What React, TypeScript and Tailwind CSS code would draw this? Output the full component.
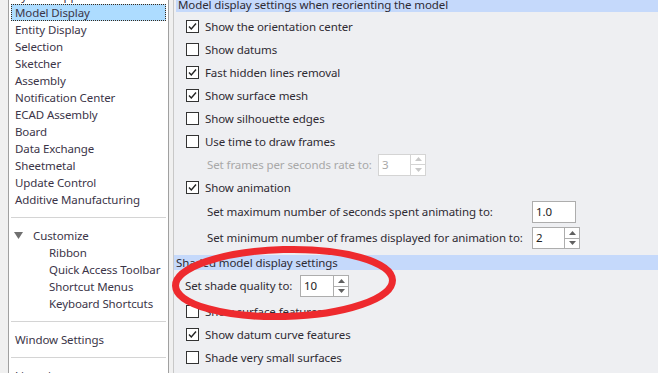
import { ReactNode } from "react"

const sideItems = [
  "System Appearance",
  "Model Display",
  "Entity Display",
  "Selection",
  "Sketcher",
  "Assembly",
  "Notification Center",
  "ECAD Assembly",
  "Board",
  "Data Exchange",
  "Sheetmetal",
  "Update Control",
  "Additive Manufacturing",
]

const customizeItems = ["Ribbon", "Quick Access Toolbar", "Shortcut Menus", "Keyboard Shortcuts"]

function Check({ checked }: { checked: boolean }) {
  return (
    <div className="w-[13px] h-[13px] border border-[#333] bg-white flex items-center justify-center shrink-0">
      {checked && (
        <svg width="11" height="11" viewBox="0 0 11 11">
          <path d="M2 5.5 L4.3 8 L9 2.5" fill="none" stroke="#222" strokeWidth="1.4" />
        </svg>
      )}
    </div>
  )
}

function CheckRow({ label, checked }: { label: string; checked: boolean }) {
  return (
    <div className="h-[23px] flex items-center pl-[12px] gap-[6px]">
      <Check checked={checked} />
      <span>{label}</span>
    </div>
  )
}

function Spin({ value, w, disabled }: { value: string; w: number; disabled?: boolean }) {
  const bd = disabled ? "border-[#d4d4d4]" : "border-[#adadad]"
  const arrow = disabled ? "#c8c8c8" : "#606060"
  return (
    <div className={`flex h-[22px] border ${bd} bg-white shrink-0`}>
      <div className={`flex items-center pl-[3px] ${disabled ? "text-[#a8a8a8]" : "text-[#222]"}`} style={{ width: w }}>
        {value}
      </div>
      <div className={`w-[15px] flex flex-col border-l ${bd}`}>
        <div className={`flex-1 flex items-center justify-center border-b ${bd}`}>
          <svg width="7" height="4" viewBox="0 0 7 4"><path d="M0 4 L3.5 0 L7 4 Z" fill={arrow} /></svg>
        </div>
        <div className="flex-1 flex items-center justify-center">
          <svg width="7" height="4" viewBox="0 0 7 4"><path d="M0 0 L3.5 4 L7 0 Z" fill={arrow} /></svg>
        </div>
      </div>
    </div>
  )
}

function Box({ value }: { value: string }) {
  return (
    <div className="w-[44px] h-[22px] border border-[#adadad] bg-white flex items-center pl-[3px] text-[#222] shrink-0">
      {value}
    </div>
  )
}

function Header({ children, className }: { children: ReactNode; className?: string }) {
  return (
    <div className={`h-[15px] bg-[#c5d9fb] flex items-center pl-[2px] leading-none ${className ?? ""}`}>
      {children}
    </div>
  )
}

export default function App() {
  return (
    <div
      className="w-[658px] h-[373px] overflow-hidden bg-[#f0f0f0] flex relative text-[11.5px] tracking-[-0.1px] whitespace-nowrap"
      style={{ fontFamily: '"Noto Sans", "Open Sans", sans-serif' }}
    >
      <div className="w-[3px] border-r border-[#a0a0a0] ml-[6px] bg-[#f0f0f0]" />
      <div className="w-[160px] bg-white border-r border-[#a0a0a0] text-[#3b3548] px-[2px] overflow-hidden">
        <div className="-mt-[13px]">
          {sideItems.map((s) => (
            <div
              key={s}
              className={`h-[17px] flex items-center pl-[4px] ${
                s === "Model Display" ? "bg-[#addcff] outline-1 outline-dotted outline-[#3a2a1a] -outline-offset-1" : ""
              }`}
            >
              {s}
            </div>
          ))}
        </div>
        <div className="h-px bg-[#d4d4d4] my-[9px]" />
        <div className="h-[17px] flex items-center pl-[3px]">
          <svg width="9" height="7" viewBox="0 0 9 7" className="mr-[10px]">
            <path d="M0 0 L9 0 L4.5 7 Z" fill="#707070" />
          </svg>
          Customize
        </div>
        {customizeItems.map((s) => (
          <div key={s} className="h-[17px] flex items-center pl-[38px]">
            {s}
          </div>
        ))}
        <div className="h-px bg-[#d4d4d4] my-[9px]" />
        <div className="h-[17px] flex items-center pl-[4px]">Window Settings</div>
        <div className="h-px bg-[#d4d4d4] my-[9px]" />
        <div className="h-[17px] flex items-center pl-[4px]">Licensing</div>
      </div>
      <div className="w-[5px] border-r border-[#c8c8c8]" />
      <div className="flex-1 bg-[#eeeff2] text-[#2e2b33] overflow-hidden">
        <Header className="-mt-[3px] ml-[2px]">Model display settings when reorienting the model</Header>
        <div className="h-[3px]" />
        <CheckRow label="Show the orientation center" checked />
        <CheckRow label="Show datums" checked={false} />
        <CheckRow label="Fast hidden lines removal" checked />
        <CheckRow label="Show surface mesh" checked />
        <CheckRow label="Show silhouette edges" checked={false} />
        <CheckRow label="Use time to draw frames" checked={false} />
        <div className="h-[23px] flex items-center pl-[33px]">
          <span className="w-[171px] text-[#a8a8a8]">Set frames per seconds rate to:</span>
          <Spin value="3" w={31} disabled />
        </div>
        <CheckRow label="Show animation" checked />
        <div className="h-[25px] flex items-center pl-[33px]">
          <span className="w-[325px]">Set maximum number of seconds spent animating to:</span>
          <Box value="1.0" />
        </div>
        <div className="h-[28px] flex items-center pl-[33px]">
          <span className="w-[325px]">Set minimum number of frames displayed for animation to:</span>
          <Spin value="2" w={31} />
        </div>
        <Header className="mt-[3px]">Shaded model display settings</Header>
        <div className="h-[22px] mt-[5px] flex items-center pl-[11px]">
          <span className="w-[115px]">Set shade quality to:</span>
          <Spin value="10" w={32} />
        </div>
        <div className="mt-[3px]">
          <CheckRow label="Show surface features" checked={false} />
          <CheckRow label="Show datum curve features" checked />
          <CheckRow label="Shade very small surfaces" checked={false} />
        </div>
      </div>
      <svg className="absolute left-0 top-0 pointer-events-none" width="658" height="373">
        <ellipse cx="284" cy="283" rx="108.5" ry="33.5" fill="none" stroke="#ee2a2e" strokeWidth="7" transform="rotate(-1.5 284 283)" />
      </svg>
    </div>
  )
}
